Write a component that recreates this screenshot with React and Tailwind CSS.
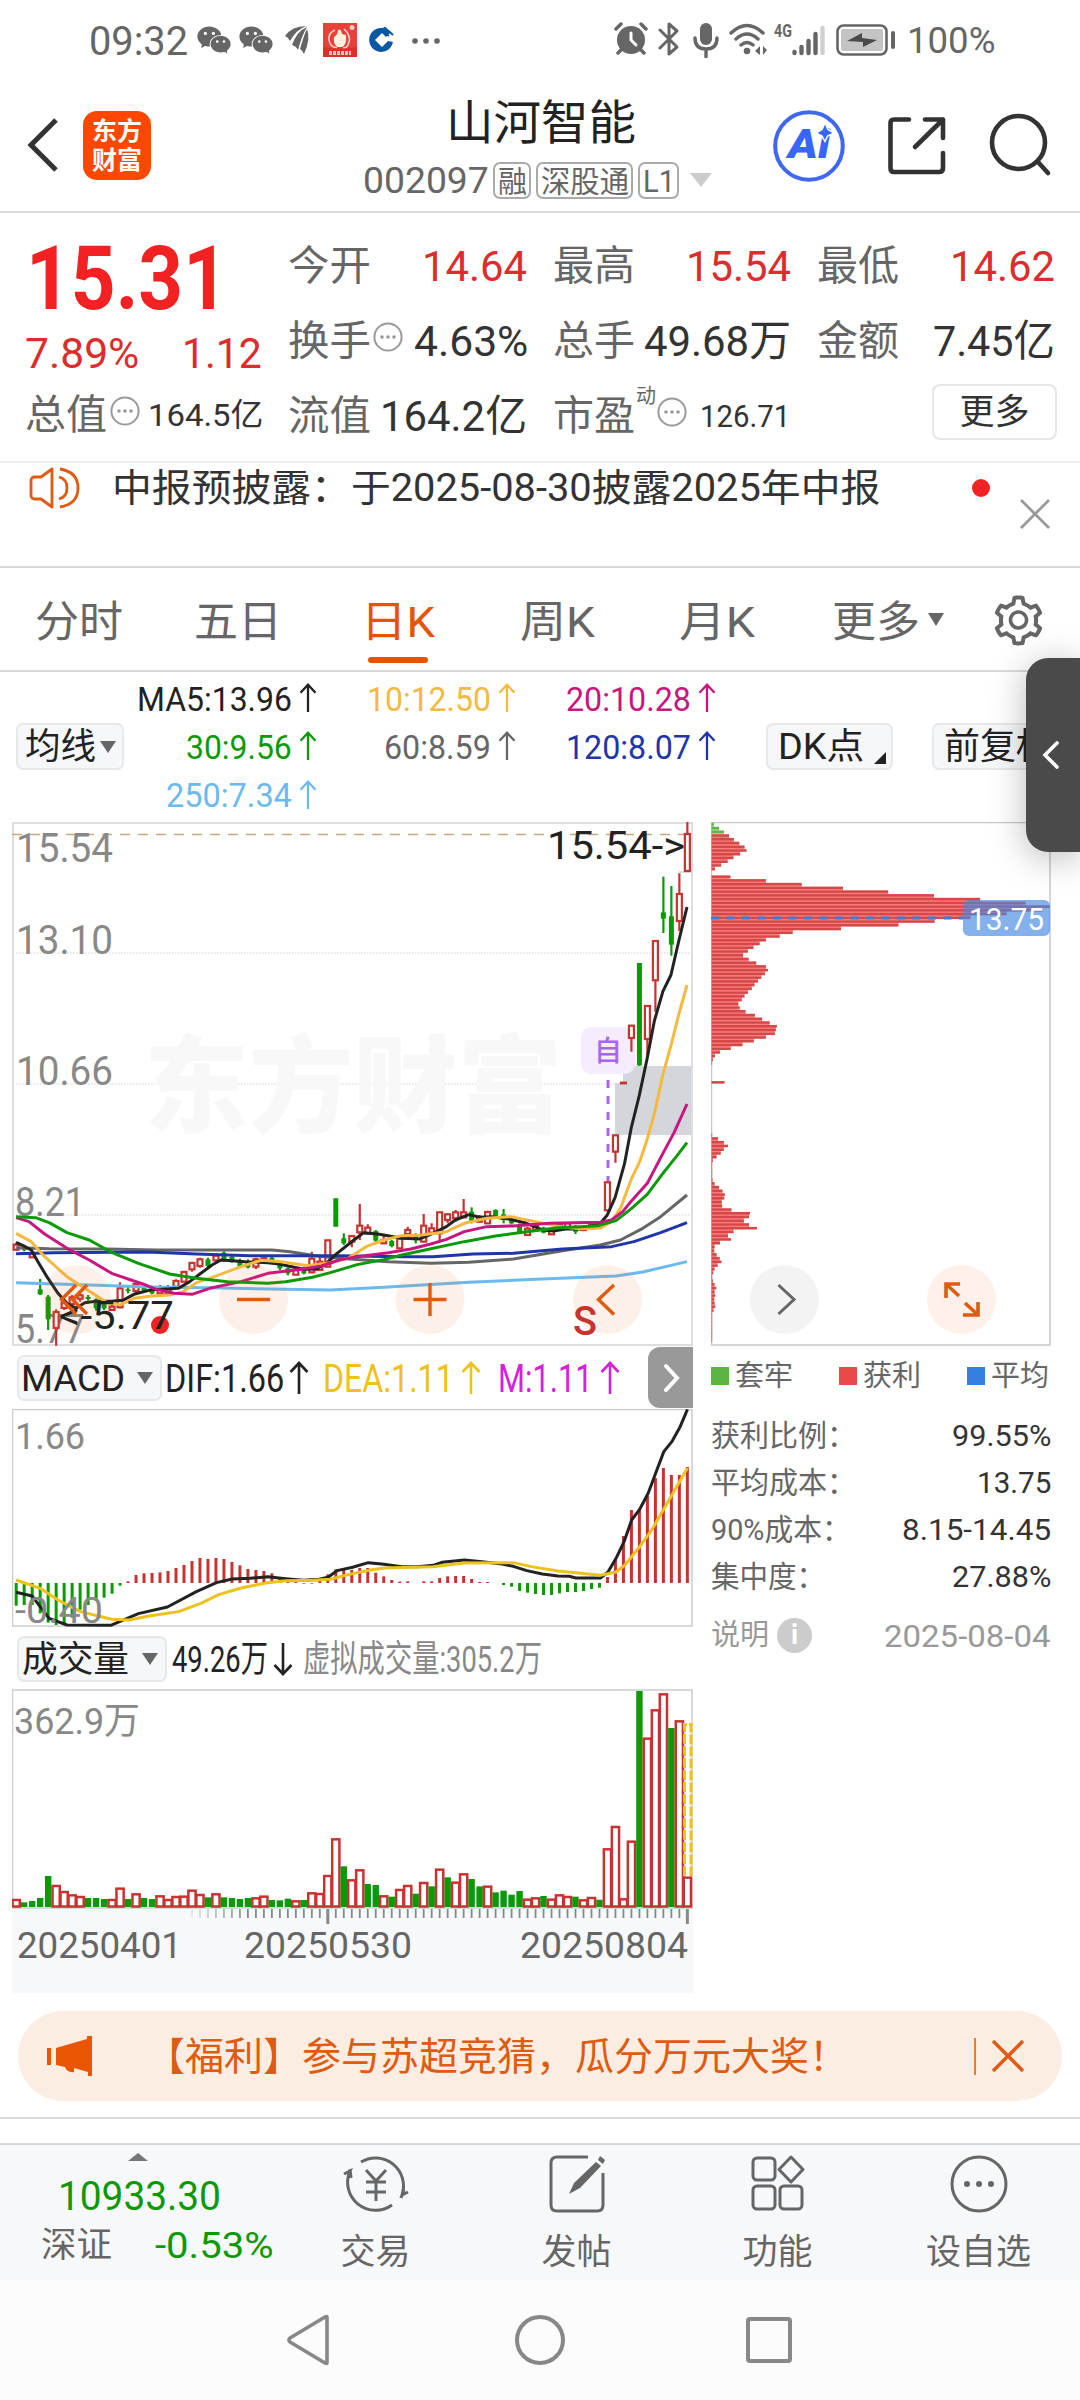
import { useLayoutEffect, useRef, useState } from "react";
import { AiOutlineSetting, AiFillWechat } from "react-icons/ai";

const RED = "#c8332f";
const GREEN = "#0b9a06";
const ORANGE = "#e05a10";

/* Single line of text, condensed or widened to fill the width of its box. */
function Fit({ className = "", children }) {
  const box = useRef(null);
  const inner = useRef(null);
  const [scale, setScale] = useState(1);
  useLayoutEffect(() => {
    const measure = () => {
      if (inner.current.offsetWidth) setScale(box.current.clientWidth / inner.current.offsetWidth);
    };
    measure();
    document.fonts?.ready.then(measure);
  }, []);
  return (
    <span ref={box} className={"block shrink-0 whitespace-nowrap " + className}>
      <span ref={inner} className="inline-block origin-left" style={{ transform: `translateY(1px) scaleX(${scale})` }}>
        {children}
      </span>
    </span>
  );
}

function Dots({ className = "" }) {
  return (
    <svg viewBox="0 0 30 30" className={"h-[30px] w-[30px] shrink-0 " + className}>
      <circle cx="15" cy="15" r="13.6" fill="none" stroke="#999" strokeWidth="2" />
      <circle cx="9" cy="15" r="1.8" fill="#999" />
      <circle cx="15" cy="15" r="1.8" fill="#999" />
      <circle cx="21" cy="15" r="1.8" fill="#999" />
    </svg>
  );
}

function Down({ className = "", color = "#666" }) {
  return (
    <svg viewBox="0 0 16 12" preserveAspectRatio="none" className={"h-[12px] w-[16px] shrink-0 " + className}>
      <path d="M0 0H16L8 12Z" fill={color} />
    </svg>
  );
}

function Arrow({ className = "", flip = false }) {
  return (
    <svg viewBox="0 0 20 34" className={"w-[20px] shrink-0 " + className}>
      <path
        d={flip ? "M10 1V33M1.5 23L10 32L18.5 23" : "M10 33V1M1.5 11L10 2L18.5 11"}
        fill="none"
        stroke="currentColor"
        strokeWidth="2.6"
      />
    </svg>
  );
}

function StatusBar() {
  return (
    <div className="flex h-[80px] items-center text-[#666]">
      <Fit className="ml-[89px] w-[99px] text-[41px] leading-[78px]">09:32</Fit>
      <AiFillWechat className="ml-[7px] h-[38px] w-[38px]" />
      <AiFillWechat className="ml-[4px] h-[38px] w-[38px]" />
      <svg viewBox="0 0 26 30" className="ml-[10px] h-[30px] w-[26px]" fill="#666">
        <path d="M0 11Q7 1 21 1Q11 5 5 16Q3 12 0 11Z" />
        <path d="M7 20Q12 6 22 2Q17 10 13 25Q11 21 7 20Z" />
        <path d="M15 24Q19 10 22 4Q26 14 19 29Q18 26 15 24Z" />
      </svg>
      <svg viewBox="0 0 34 34" className="ml-[12px] h-[34px] w-[34px]">
        <rect width="34" height="34" fill="#e8413c" />
        <path d="M12 7Q5 10 6 17T14 25M21 6Q28 12 26 19T20 25" fill="none" stroke="#fbd9cf" strokeWidth="1.5" />
        <path d="M15 7Q18 5 19 11L23 12Q24 22 19 24H14Q10 21 11 14Q15 12 15 7Z" fill="#fdf0dc" />
        <circle cx="29" cy="4.500" r="2.500" fill="#f9c9bd" />
        <path d="M0 24Q17 27 34 24V34H0Z" fill="#dc2f2a" />
        <path d="M6 30H28" stroke="#f6c3b4" strokeWidth="4" strokeDasharray="3 1" />
      </svg>
      <svg viewBox="0 0 26 26" className="ml-[12px] h-[26px] w-[26px]">
        <path d="M19 3A12 12 0 1 0 24 15L19 14L13 20L6 13L13 6L17 10L22 5Z" fill="#0a57a4" />
        <path d="M15 0L24 8M11 2L20 9" stroke="#0a57a4" strokeWidth="2" />
        <path d="M13 8L18 13L13 18L8 13Z" fill="#fff" />
      </svg>
      <svg viewBox="0 0 28 6" className="ml-[17px] mt-[1px] h-[6px] w-[28px]" fill="#666">
        <circle cx="3" cy="3" r="2.800" />
        <circle cx="14" cy="3" r="2.800" />
        <circle cx="25" cy="3" r="2.800" />
      </svg>
      <svg viewBox="0 0 34 34" className="-mt-[2px] ml-[174px] h-[34px] w-[34px]">
        <circle cx="17" cy="18" r="14" fill="#666" />
        <path d="M2 7L7 2M32 7L27 2M7 28L4 31M27 28L30 31" stroke="#666" strokeWidth="3.500" strokeLinecap="round" />
        <path d="M17 11V18L22 23" fill="none" stroke="#fff" strokeWidth="3" strokeLinecap="round" />
      </svg>
      <svg viewBox="0 0 22 34" className="-mt-[2px] ml-[10px] h-[34px] w-[22px]">
        <path d="M2 8L19 25L11 32V2L19 9L2 26" fill="none" stroke="#666" strokeWidth="3" strokeLinejoin="round" strokeLinecap="round" />
      </svg>
      <svg viewBox="0 0 26 36" className="ml-[13px] h-[36px] w-[26px]">
        <rect x="7" y="1" width="12" height="22" rx="6" fill="#666" />
        <path d="M2 16Q2 27 13 27T24 16M13 27V35" fill="none" stroke="#666" strokeWidth="3.400" strokeLinecap="round" />
      </svg>
      <svg viewBox="0 0 38 34" className="-mt-[2px] ml-[10px] h-[34px] w-[38px]" fill="none" stroke="#666" strokeWidth="3.400" strokeLinecap="round">
        <path d="M2 11Q18 -4 34 11M7 17Q18 7 29 17M12 23Q18 18 24 23" />
        <circle cx="18" cy="29" r="1.600" fill="#666" />
        <path d="M31 24V33L26 29ZM34 24V33L38 28Z" fill="#666" strokeWidth="0" />
      </svg>
      <Fit className="-mt-[20px] ml-[7px] w-[18px] text-[19px] font-bold leading-[20px]">4G</Fit>
      <svg viewBox="0 0 33 31" className="h-[31px] w-[33px]" strokeWidth="4.400" strokeLinecap="round">
        <path d="M2.500 27V28M9.500 22V28M16.500 16V28M23.500 9V28" stroke="#666" />
        <path d="M30.500 3V28" stroke="#d0d0d0" />
      </svg>
      <svg viewBox="0 0 60 32" className="-mt-[1px] ml-[11px] h-[32px] w-[60px]">
        <rect x="1.500" y="1.500" width="49" height="29" rx="6" fill="none" stroke="#666" strokeWidth="2.600" />
        <rect x="5" y="5" width="42" height="22" rx="2" fill="#c4c4c4" />
        <path d="M11 17L26 9V14L41 16L27 23V18Z" fill="#4a4a4a" />
        <path d="M57 9V23" stroke="#666" strokeWidth="4" strokeLinecap="round" />
      </svg>
      <Fit className="ml-[11px] w-[88px] text-[37px] leading-[80px]">100%</Fit>
    </div>
  );
}

function Header() {
  return (
    <div className="flex h-[133px] border-b-2 border-[#dadada]">
      <svg viewBox="0 0 32 56" className="ml-[27px] mt-[37px] h-[56px] w-[32px]">
        <path d="M29 3L4 28L29 53" fill="none" stroke="#333" strokeWidth="5" />
      </svg>
      <div className="ml-[24px] mt-[31px] flex h-[69px] w-[68px] flex-col items-center justify-center rounded-[14px] bg-[#ff4700] text-[25px] font-bold leading-[29px] text-white">
        <span>东方</span>
        <span>财富</span>
      </div>
      <div className="ml-[211px] flex w-[354px] flex-col">
        <Fit className="ml-[84px] mt-[13px] w-[190px] text-[47px] leading-[58px] text-[#222]">山河智能</Fit>
        <div className="mt-[10px] flex h-[38px] items-center text-[30px] leading-[33px] text-[#666]">
          <Fit className="ml-[1px] w-[126px] text-[37px] leading-[38px]">002097</Fit>
          <span className="ml-[4px] flex h-[37px] w-[38px] justify-center rounded-[7px] border-2 border-[#aaa]">
            <Fit className="w-[29px]">融</Fit>
          </span>
          <span className="ml-[5px] flex h-[37px] w-[97px] justify-center rounded-[7px] border-2 border-[#aaa]">
            <Fit className="w-[88px]">深股通</Fit>
          </span>
          <span className="ml-[5px] flex h-[37px] w-[41px] justify-center rounded-[7px] border-2 border-[#aaa]">
            <Fit className="w-[32px] text-[32px]">L1</Fit>
          </span>
          <Down className="ml-[11px] h-[14px] w-[22px]" color="#ccc" />
        </div>
      </div>
      <svg viewBox="0 0 72 72" className="ml-[57px] mt-[30px] h-[72px] w-[72px] shrink-0">
        <circle cx="36" cy="36" r="33.800" fill="none" stroke="#3f68f0" strokeWidth="4" />
        <text x="15" y="48" textLength="42" lengthAdjust="spacingAndGlyphs" fontSize="40" fontWeight="900" fontStyle="italic" fill="#3665ff" className="font-[Roboto]">
          Ai
        </text>
        <path d="M52 13L55 19.500L61 23L54.500 26L52 31.500L49 26L43 23L49 19.500Z" fill="#3665ff" stroke="#fff" strokeWidth="1.500" />
      </svg>
      <svg viewBox="0 0 60 60" className="ml-[42px] mt-[36px] h-[60px] w-[60px] shrink-0" fill="none" stroke="#333" strokeWidth="4.600" strokeLinecap="round" strokeLinejoin="round">
        <path d="M22 3.500H7Q3.500 3.500 3.500 7V52Q3.500 56 7 56H52Q56 56 56 52V37" />
        <path d="M38 3.500H56V22M56 3.500L28 31" />
      </svg>
      <svg viewBox="0 0 64 64" className="ml-[42px] mt-[33px] h-[64px] w-[64px] shrink-0" fill="none" stroke="#333" strokeWidth="4.600" strokeLinecap="round">
        <circle cx="29.500" cy="29.500" r="26.500" />
        <path d="M49 49L59 60" />
      </svg>
    </div>
  );
}

function Quote() {
  return (
    <div className="flex h-[250px] border-b-2 border-[#efefef] pl-[25px] pt-[15px] text-[41px] text-[#666]">
      <div className="w-[237px]">
        <Fit className="ml-[1px] w-[202px] text-[89px] font-bold leading-[99px] text-[#f22222]">15.31</Fit>
        <div className="flex justify-between text-[43px] leading-[50px] text-[#dd2c2c]">
          <Fit className="w-[114px]">7.89%</Fit>
          <Fit className="w-[80px]">1.12</Fit>
        </div>
        <div className="flex items-center leading-[75px]">
          <Fit className="w-[82px]">总值</Fit>
          <Dots className="-mt-[8px] ml-[3px]" />
          <Fit className="ml-[8px] w-[115px] text-[32px] text-[#333]">164.5亿</Fit>
        </div>
      </div>
      <div className="ml-[26px] w-[239px] leading-[75px]">
        <div className="flex justify-between">
          <Fit className="w-[83px]">今开</Fit>
          <Fit className="w-[105px] text-[43px] text-[#dd2c2c]">14.64</Fit>
        </div>
        <div className="flex items-center">
          <Fit className="w-[83px]">换手</Fit>
          <Dots className="-mt-[8px] ml-[2px]" />
          <Fit className="ml-[11px] w-[114px] text-[43px] text-[#333]">4.63%</Fit>
        </div>
        <div className="flex justify-between">
          <Fit className="w-[83px]">流值</Fit>
          <Fit className="w-[147px] text-[43px] text-[#333]">164.2亿</Fit>
        </div>
      </div>
      <div className="ml-[26px] w-[238px] leading-[75px]">
        <div className="flex justify-between">
          <Fit className="w-[82px]">最高</Fit>
          <Fit className="w-[105px] text-[43px] text-[#dd2c2c]">15.54</Fit>
        </div>
        <div className="flex justify-between">
          <Fit className="w-[82px]">总手</Fit>
          <Fit className="w-[147px] text-[43px] text-[#333]">49.68万</Fit>
        </div>
        <div className="flex items-center">
          <Fit className="w-[82px]">市盈</Fit>
          <span className="-mt-[40px] ml-[1px] text-[20px] leading-[24px]">动</span>
          <Dots className="-mt-[8px] ml-[1px]" />
          <Fit className="ml-[13px] w-[90px] text-[31px] text-[#333]">126.71</Fit>
        </div>
      </div>
      <div className="ml-[26px] w-[238px] leading-[75px]">
        <div className="flex justify-between">
          <Fit className="w-[82px]">最低</Fit>
          <Fit className="w-[105px] text-[43px] text-[#dd2c2c]">14.62</Fit>
        </div>
        <div className="flex justify-between">
          <Fit className="w-[82px]">金额</Fit>
          <Fit className="w-[122px] text-[43px] text-[#333]">7.45亿</Fit>
        </div>
        <div className="ml-[115px] mt-[6px] flex h-[56px] w-[125px] items-center justify-center rounded-[8px] border-2 border-[#e6e6e6] pt-[2px] text-[35px] leading-[50px] text-[#333]">
          更多
        </div>
      </div>
    </div>
  );
}

function Notice() {
  return (
    <div className="flex h-[105px] border-b-2 border-[#dadada]">
      <svg viewBox="0 0 52 44" className="ml-[29px] mt-[3px] h-[44px] w-[52px]" fill="none" stroke={ORANGE} strokeWidth="2.800" strokeLinejoin="round">
        <path d="M23 3L12 11H6Q2 11 2 15V29Q2 33 6 33H12L23 41Z" />
        <path d="M30 11Q38 13 38 22T30 33M31 3Q49 6 49 22T31 41" />
      </svg>
      <Fit className="ml-[31px] w-[768px] text-[38px] leading-[49px] text-[#333]">中报预披露：于2025-08-30披露2025年中报</Fit>
      <span className="ml-[92px] mt-[16px] h-[18px] w-[18px] rounded-full bg-[#f22222]" />
      <svg viewBox="0 0 30 30" className="ml-[30px] mt-[36px] h-[30px] w-[30px]">
        <path d="M1 1L29 29M29 1L1 29" stroke="#999" strokeWidth="2.800" />
      </svg>
    </div>
  );
}

function Tabs() {
  return (
    <div className="flex h-[104px] border-b-2 border-[#dadada] text-[43px] leading-[106px] text-[#666]">
      <Fit className="ml-[35px] w-[88px]">分时</Fit>
      <Fit className="ml-[71px] w-[88px]">五日</Fit>
      <div className="ml-[78px] h-[102px] w-[75px] text-[#e65400]">
        <Fit className="ml-[1px] h-[88px] w-[74px]">日K</Fit>
        <div className="ml-[8px] mt-[1px] h-[6px] w-[60px] rounded-full bg-[#e65400]" />
      </div>
      <Fit className="ml-[85px] w-[75px]">周K</Fit>
      <Fit className="ml-[84px] w-[76px]">月K</Fit>
      <Fit className="ml-[77px] w-[88px]">更多</Fit>
      <Down className="ml-[8px] mt-[45px] h-[13px] w-[15px]" />
      <AiOutlineSetting className="ml-[46px] mt-[24px] h-[57px] w-[57px] shrink-0" />
    </div>
  );
}

const averages = [
  ["MA5:13.96", "w-[155px]", "text-[#222]"],
  ["10:12.50", "w-[124px]", "text-[#f5b93f]"],
  ["20:10.28", "w-[125px]", "text-[#c8157f]"],
  ["30:9.56", "w-[106px]", "text-[#0b9a06]"],
  ["60:8.59", "w-[107px]", "text-[#666]"],
  ["120:8.07", "w-[125px]", "text-[#1f35a8]"],
  ["250:7.34", "w-[126px]", "text-[#6bbaee]"],
];

function AverageBar() {
  return (
    <div className="flex h-[150px] text-[36px] text-[#222]">
      <div className="ml-[16px] mt-[51px] flex h-[47px] w-[108px] shrink-0 items-center rounded-[7px] border-2 border-[#e6e8ea] bg-[#f6f7f9] pl-[7px] leading-[43px]">
        <Fit className="w-[71px]">均线</Fit>
        <Down className="ml-[4px] w-[15px]" />
      </div>
      <div className="mt-[2px] grid h-[145px] shrink-0 grid-cols-[194px_199px_200px] text-[34px] leading-[47px]">
        {averages.map(([text, width, color]) => (
          <div key={text} className={"flex items-center justify-end " + color}>
            <Fit className={width}>{text}</Fit>
            <Arrow className="ml-[6px] h-[30px]" />
          </div>
        ))}
      </div>
      <div className="ml-[49px] mt-[51px] flex h-[47px] w-[127px] shrink-0 items-center rounded-[7px] border-2 border-[#e6e8ea] bg-[#f6f7f9] pl-[10px] leading-[43px]">
        <Fit className="w-[86px]">DK点</Fit>
        <svg viewBox="0 0 12 12" className="ml-[10px] mt-[22px] h-[12px] w-[12px]">
          <path d="M12 0V12H0Z" fill="#222" />
        </svg>
      </div>
      <div className="ml-[39px] mt-[51px] flex h-[47px] w-[148px] shrink-0 items-center rounded-[7px] border-2 border-[#e6e8ea] bg-[#f6f7f9] pl-[10px] leading-[43px]">
        <Fit className="w-[108px]">前复权</Fit>
      </div>
    </div>
  );
}

/* Daily bars: [up, high, top, bottom, low], three units to a pixel, zero at y 1080. */
const candles = [
  [1, 488, 494, 509, 512], [0, 497, 502, 510, 514], [1, 515, 521, 532, 534], [0, 597, 628, 643, 645], [0, 645, 650, 718, 750],
  [1, 688, 696, 744, 797], [1, 655, 668, 684, 690], [1, 645, 652, 672, 680], [1, 640, 646, 656, 665], [0, 645, 651, 657, 662],
  [0, 655, 658, 685, 692], [0, 665, 672, 685, 690], [1, 675, 680, 690, 692], [1, 607, 625, 682, 685], [0, 620, 628, 633, 640],
  [1, 606, 612, 633, 640], [0, 618, 624, 632, 638], [0, 625, 630, 640, 643], [1, 615, 628, 640, 642], [1, 615, 625, 640, 645],
  [1, 598, 603, 620, 622], [1, 572, 576, 605, 607], [1, 545, 549, 568, 575], [1, 533, 538, 558, 563], [0, 533, 538, 558, 563],
  [1, 520, 527, 541, 545], [0, 514, 518, 540, 545], [0, 526, 530, 543, 548], [0, 536, 541, 560, 563], [0, 538, 545, 562, 565],
  [1, 533, 538, 560, 567], [1, 525, 535, 545, 550], [0, 527, 533, 545, 548], [0, 548, 551, 565, 570], [0, 562, 565, 580, 586],
  [1, 565, 570, 584, 586], [0, 560, 564, 580, 583], [1, 515, 536, 577, 580], [1, 530, 545, 570, 573], [1, 480, 481, 560, 562],
  [0, 355, 355, 440, 440], [0, 460, 475, 490, 495], [1, 465, 468, 485, 502], [1, 372, 437, 457, 480], [1, 433, 443, 460, 463],
  [0, 450, 453, 482, 487], [1, 465, 480, 490, 492], [0, 480, 483, 498, 502], [1, 470, 476, 505, 507], [1, 440, 450, 462, 475],
  [0, 460, 465, 480, 490], [1, 402, 437, 485, 487], [1, 430, 445, 458, 465], [1, 396, 397, 460, 482], [1, 400, 403, 420, 430],
  [1, 390, 397, 415, 425], [1, 357, 397, 412, 415], [0, 382, 395, 425, 430], [1, 405, 412, 425, 428], [1, 392, 396, 430, 432],
  [0, 388, 390, 410, 412], [0, 387, 403, 420, 430], [0, 412, 416, 430, 433], [0, 430, 435, 458, 462], [1, 440, 446, 465, 467],
  [1, 435, 438, 450, 453], [0, 440, 443, 458, 460], [1, 444, 447, 463, 465], [1, 430, 435, 447, 450], [1, 428, 430, 441, 444],
  [0, 435, 438, 455, 462], [1, 438, 441, 450, 454], [1, 430, 433, 445, 448], [0, 430, 433, 440, 443], [1, 305, 307, 391, 392],
  [1, 165, 166, 215, 248], [1, 7, 8, 10, 12], [1, -165, -163, -126, -85], [0, -351, -351, -44, -42], [1, -224, -222, -123, -75],
  [1, -419, -417, -299, -205], [0, -610, -503, -484, -441], [0, -582, -491, -406, -373], [1, -620, -558, -477, -447], [1, -774, -738, -627, -626],
];

const DAY = 7.99;
const dayX = (i) => 16.2 + DAY * i;

const averageLines = [
  ["#6bbaee", "36,608 200,615 340,621 500,624 640,628 740,630 860,622 1050,607 1200,598 1380,588 1440,576 1539,545"],
  ["#666666", "36,503 110,506 240,507 350,510 610,510 650,515 710,528 760,535 870,545 965,550 1050,547 1150,537 1200,526 1260,512 1345,495 1390,480 1440,445 1480,410 1539,345"],
  ["#1f35a8", "36,521 120,518 330,516 440,522 560,527 760,527 900,530 970,530 1060,522 1150,520 1260,507 1370,500 1420,485 1480,458 1539,428"],
  ["#222222", "36,487 52,497 70,510 85,545 105,590 130,640 150,670 170,685 190,668 215,664 250,664 275,661 300,643 340,629 375,627 400,625 425,605 450,580 475,555 495,540 550,545 600,548 625,552 680,568 710,567 735,545 755,520 790,483 815,458 850,463 900,475 940,477 965,463 1000,440 1020,420 1050,404 1075,412 1100,410 1140,417 1180,430 1215,450 1240,453 1270,446 1300,447 1345,430 1360,406 1378,352 1399,251 1414,144 1432,47 1449,-60 1466,-178 1485,-266 1503,-315 1520,-414 1539,-519"],
  ["#f5b93f", "36,460 70,485 100,530 150,590 190,625 240,668 270,674 300,655 340,648 380,645 410,635 440,608 480,590 540,560 585,541 630,545 690,557 740,548 780,535 820,500 860,480 900,467 940,466 1000,455 1040,430 1090,415 1145,410 1215,430 1260,441 1300,446 1345,444 1370,425 1390,385 1415,295 1433,245 1449,181 1466,101 1485,-17 1503,-103 1520,-194 1539,-285"],
  ["#c8157f", "36,413 65,425 100,462 150,505 200,540 250,580 320,612 350,628 390,640 430,643 470,625 540,605 600,580 680,567 720,558 760,540 800,530 870,518 920,507 965,492 1000,478 1040,455 1090,440 1150,438 1230,430 1345,427 1370,420 1395,395 1415,362 1450,310 1485,220 1510,158 1539,72"],
  ["#0b9a06", "36,410 80,413 110,428 150,458 200,480 250,517 310,550 380,582 440,595 510,605 600,610 640,605 700,592 740,578 800,554 860,539 900,525 960,508 1040,485 1110,468 1180,455 1250,443 1300,440 1340,437 1380,422 1415,385 1450,343 1485,280 1515,230 1539,188"],
];

function Label({ x, y, w, size = 39, fill = "#888", weight = 400, children }) {
  return (
    <text x={x} y={y} textLength={w} lengthAdjust="spacingAndGlyphs" fontSize={size} fontWeight={weight} fill={fill}>
      {children}
    </text>
  );
}

function PriceChart() {
  return (
    <svg viewBox="12 822 681 524" className="block h-[524px] w-[681px]">
      <rect x="13" y="823" width="679" height="522" fill="#fff" stroke="#dedede" strokeWidth="2" />
      <g stroke="#e2e2e2" strokeWidth="1.500" strokeDasharray="1.500 1.500">
        <path d="M13 953H691M13 1084H691M13 1215H691" />
      </g>
      <text x="144" y="1124" textLength="418" lengthAdjust="spacingAndGlyphs" fontSize="106" fontWeight="900" fill="#f8f8f8">
        东方财富
      </text>
      <path d="M623 1066H691V1135H615V1083H623Z" fill="#d3d6db" />
      <path d="M679 872H691" stroke="#d3d6db" strokeWidth="1.500" />
      <path d="M12 834.500H691" stroke="#c9a978" strokeWidth="1.500" strokeDasharray="10 8" />
      <rect x="581" y="1027" width="54" height="47" rx="10" fill="#f5ecff" />
      <text x="608" y="1061" textAnchor="middle" fontSize="28" fontWeight="500" fill="#a866ee">自</text>
      <path d="M608 1080V1182" stroke="#a866ee" strokeWidth="3" strokeDasharray="8 8" />
      <Label x="16" y="861.500" w="97" size={40}>15.54</Label>
      <Label x="16" y="954" w="97" size={40}>13.10</Label>
      <Label x="16" y="1085" w="97" size={40}>10.66</Label>
      <Label x="15" y="1216" w="70" size={40}>8.21</Label>
      <Label x="15" y="1343" w="70" size={40}>5.77</Label>
      {candles.map(([up, high, top, bottom, low], i) => {
        const x = dayX(i);
        const y = (v) => 1080 + v / 3;
        return up ? (
          <g key={i} stroke={RED}>
            <path d={`M${x} ${y(high)}V${y(top)}M${x} ${y(bottom)}V${y(low)}`} strokeWidth="2.200" />
            <rect x={x - 2.5} y={y(top)} width="5" height={y(bottom) - y(top)} fill="#fff" strokeWidth="2.200" />
          </g>
        ) : (
          <g key={i} fill={GREEN}>
            <rect x={x - 1.1} y={y(high)} width="2.200" height={y(low) - y(high)} />
            <rect x={x - 2.5} y={y(top)} width="5" height={y(bottom) - y(top)} />
          </g>
        );
      })}
      <g transform="translate(0 1080) scale(0.4464 0.3333)" fill="none" strokeWidth="3" strokeLinejoin="round">
        {averageLines.map(([color, points]) => (
          <polyline key={color} points={points} stroke={color} vectorEffect="non-scaling-stroke" />
        ))}
      </g>
      <Label x="547" y="859" w="138" size={39} fill="#222">{"15.54->"}</Label>
      <g fill="#ee6a20" fillOpacity="0.1">
        <circle cx="77" cy="1299.500" r="34.500" />
        <circle cx="253.500" cy="1299.500" r="34.500" />
        <circle cx="430" cy="1299.500" r="34.500" />
        <circle cx="607.500" cy="1299.500" r="34.500" />
      </g>
      <circle cx="160" cy="1325" r="9" fill="#ee2222" />
      <Label x="59" y="1329" w="115" size={39} fill="#222">{"<-5.77"}</Label>
      <g fill="none" stroke={ORANGE} strokeWidth="3.400">
        <path d="M76 1285L61.500 1299.500L76 1314M87 1285L72.500 1299.500L87 1314" />
        <path d="M237 1299.500H270M413.500 1299.500H446.500M430 1283V1316M614 1285L598.500 1299.500L614 1314.500" />
      </g>
      <Label x="573" y="1335" w="24" size={41} weight={500} fill={RED}>S</Label>
    </svg>
  );
}

const macd = [
  797, 795, 795, 820, 848, 855, 853, 833, 809, 795, 783, 773, 761, 737, 724, 705, 700, 699, 697, 693, 684, 675, 663, 654, 657, 654, 657,
  666, 676, 687, 690, 693, 700, 713, 721, 726, 731, 731, 720, 703, 688, 690, 690, 684, 684, 698, 709, 720, 725, 724, 729, 724, 724, 714,
  709, 708, 708, 717, 726, 726, 729, 735, 740, 753, 758, 762, 765, 765, 760, 756, 756, 753, 747, 743, 711, 657, 588, 510, 506, 468, 414,
  384, 405, 405, 381,
];

function MacdChart() {
  return (
    <svg viewBox="12 1409 681 218" className="block h-[218px] w-[681px]">
      <rect x="12.500" y="1409.500" width="679.500" height="216.500" fill="#fff" stroke="#ccc" strokeWidth="1.500" />
      {macd.map((v, i) => (
        <path key={i} d={`M${dayX(i)} 1583V${1340 + v / 3}`} stroke={v < 729 ? RED : GREEN} strokeWidth="3" />
      ))}
      <g transform="translate(0 1340) scale(0.4464 0.3333)" fill="none" strokeWidth="3" strokeLinejoin="round">
        <polyline
          vectorEffect="non-scaling-stroke"
          stroke="#222"
          points="36,757 72,768 90,800 110,835 150,855 248,856 310,821 375,801 440,755 485,728 520,717 560,715 600,710 640,716 680,721 715,718 735,712 755,692 790,682 825,668 860,673 900,680 935,680 970,676 990,667 1040,660 1080,665 1120,671 1150,679 1180,692 1215,702 1250,708 1275,709 1290,714 1345,714 1362,696 1380,655 1398,605 1415,540 1433,508 1452,460 1470,395 1487,335 1505,305 1523,262 1540,208"
        />
        <polyline
          vectorEffect="non-scaling-stroke"
          stroke="#eec21c"
          points="36,720 90,745 130,780 180,815 250,838 290,840 330,829 400,815 450,790 490,764 540,744 600,728 640,722 700,721 740,718 780,704 830,690 860,684 970,680 1040,669 1150,668 1190,680 1250,693 1300,700 1345,706 1380,696 1400,675 1433,620 1460,570 1490,500 1540,384"
        />
      </g>
      <Label x="15" y="1449" w="70" size={37}>1.66</Label>
      <Label x="15" y="1623" w="88" size={37}>-0.40</Label>
    </svg>
  );
}

/* Volume bars: distance of the bar's top, then its direction. */
const volumes =
  "657r 667g 663g 654g 588g 615r 633r 643r 648r 654g 654g 657g 657r 623r 657g 640r 654g 657g 646r 657r 648r 647r 629r 642r 652g 640r 652g 654g 657g 654g 652r 647r 660g 661g 656g 661r 660g 637r 639r 585r 475r 559g 598r 568r 612g 615g 646r 650g 627r 615r 641g 606r 619g 566r 592g 605r 580r 597g 619g 617r 637g 632g 644g 633g 656r 652r 648g 656r 643r 648r 650g 658r 651r 659g 505r 438r 655r 482r 33g 173r 88r 40r 144g 121r 590r"
    .split(" ")
    .map((s) => [1680 + parseInt(s, 10) / 3, s.endsWith("r")]);

function VolumeChart() {
  return (
    <svg viewBox="12 1689 681 304" className="block h-[304px] w-[681px]">
      <rect x="12" y="1908" width="681" height="85" fill="#f7f8fa" />
      <rect x="12.500" y="1690" width="679.500" height="218" fill="#fff" stroke="#ccc" strokeWidth="1.500" />
      {volumes.map(([top, up], i) =>
        up ? (
          <rect key={i} x={dayX(i) - 3.6} y={top + 1} width="7.200" height={1905.5 - top} fill="#fff" stroke={RED} strokeWidth="2.500" />
        ) : (
          <rect key={i} x={dayX(i) - 3.2} y={top} width="6.400" height={1907 - top} fill={GREEN} />
        )
      )}
      <path d="M684.500 1876V1724.500H691V1876" fill="none" stroke="#eec21c" strokeWidth="3" strokeDasharray="10 2" />
      <path d="M682.600 1730V1872" stroke={RED} strokeWidth="1.500" strokeDasharray="2 10" />
      {Array.from({ length: 63 }, (_, k) => k + 22).map((i) => {
        const major = i === 39 || i === 84;
        return (
          <path
            key={i}
            d={`M${dayX(i)} 1909V${major ? 1924 : 1918}`}
            stroke="#888"
            strokeWidth={major ? 3 : 1.8}
            opacity={Math.min(1, 0.15 + (i - 22) * 0.12)}
          />
        );
      })}
      <Label x="14" y="1734" w="126" size={37}>362.9万</Label>
      <Label x="17" y="1958" w="165" size={37} fill="#666">20250401</Label>
      <Label x="244" y="1958" w="168" size={37} fill="#666">20250530</Label>
      <Label x="520" y="1958" w="168" size={37} fill="#666">20250804</Label>
    </svg>
  );
}

const chips = [
  505, 520, 534, 549, 563, 579, 594, 600, 581, 562, 545, 526, 508, 498, 553, 656, 760, 880, 1011, 1144, 1278, 1410, 1480, 1460, 1355, 1250,
  1146, 1041, 874, 734, 696, 656, 638, 620, 604, 590, 606, 628, 656, 662, 653, 643, 633, 623, 615, 604, 594, 586, 576, 580, 597, 624, 645,
  667, 688, 685, 682, 656, 621, 588, 554, 523, 508, 502, 500, 498, 498, 498, 498, 536, 498, 498, 498, 498, 498, 498, 498, 498, 498, 498,
  498, 498, 498, 500, 517, 534, 546, 534, 525, 513, 502, 500, 500, 500, 500, 501, 507, 520, 530, 537, 535, 528, 529, 556, 610, 607, 592,
  607, 630, 562, 546, 555, 523, 507, 506, 513, 522, 527, 516, 507, 503, 500, 502, 507, 512, 507, 509, 506, 507, 509, 504, 500, 500, 500,
  500, 500, 500, 500, 500,
].map((v) => (v - 498) / 2.904);

function ChipChart() {
  return (
    <svg viewBox="711 822 340 524" className="block h-[524px] w-[340px]">
      <rect x="711.500" y="822.500" width="338.500" height="522.500" fill="#fff" stroke="#c8c8c8" strokeWidth="1.500" />
      {chips.map((w, k) => {
        const y = 823 + k * 3.74;
        const next = Math.min(w, chips[k + 1] ?? 0);
        const trapped = k < 3;
        return (
          <g key={k}>
            <rect x="711.500" y={y + 2} width={next} height="2" fill={trapped ? "#a5dd93" : "#ff8080"} />
            <rect x="711.500" y={y} width={w} height="2.600" fill={trapped ? "#5fb548" : "#d64848"} />
          </g>
        );
      })}
      <path d="M711 918H963" stroke="#3a7fe0" strokeWidth="3" strokeDasharray="8 7.500" />
      <rect x="963" y="900" width="87" height="36" rx="6" fill="#4488e2" fillOpacity="0.66" />
      <Label x="969" y="930" w="75" size={32} fill="#fff">13.75</Label>
      <circle cx="784.500" cy="1299.500" r="34.500" fill="#f3f3f3" />
      <path d="M778.500 1285L794 1299.500L778.500 1314" fill="none" stroke="#666" strokeWidth="3" />
      <circle cx="961.500" cy="1299.500" r="34.500" fill="#fff1ea" />
      <path d="M946 1298V1284H960M946 1284L959 1296M978 1302V1315H963M977 1314L965 1303" fill="none" stroke={ORANGE} strokeWidth="3.600" />
    </svg>
  );
}

const costRows = [
  ["获利比例：", "w-[145px]", "99.55%", "w-[99px]"],
  ["平均成本：", "w-[145px]", "13.75", "w-[74px]"],
  ["90%成本：", "w-[140px]", "8.15-14.45", "w-[149px]"],
  ["集中度：", "w-[114px]", "27.88%", "w-[99px]"],
];

function Charts() {
  return (
    <div className="flex h-[1171px] pl-[12px]">
      <div className="w-[681px]">
        <PriceChart />
        <div className="flex h-[63px] items-center pl-[5px] text-[39px] leading-[62px]">
          <div className="flex h-[46px] w-[145px] shrink-0 items-center rounded-[7px] border-2 border-[#e6e8ea] bg-[#f6f7f9] pl-[2px] leading-[42px] text-[#222]">
            <Fit className="w-[104px] text-[37px]">MACD</Fit>
            <Down className="ml-[12px]" />
          </div>
          <Fit className="ml-[3px] w-[119px] text-[#222]">DIF:1.66</Fit>
          <Arrow className="ml-[5px] h-[34px] text-[#222]" />
          <Fit className="ml-[14px] w-[131px] text-[#eec21c]">DEA:1.11</Fit>
          <Arrow className="ml-[7px] h-[34px] text-[#eec21c]" />
          <Fit className="ml-[17px] w-[95px] text-[#d422dc]">M:1.11</Fit>
          <Arrow className="ml-[7px] h-[34px] text-[#d422dc]" />
          <div className="ml-auto flex h-[61px] w-[45px] items-center justify-center rounded-l-[12px] bg-[#999]">
            <svg viewBox="0 0 18 30" className="ml-[2px] h-[30px] w-[18px]">
              <path d="M3 3L14 15L3 27" fill="none" stroke="#fff" strokeWidth="4" strokeLinecap="round" />
            </svg>
          </div>
        </div>
        <MacdChart />
        <div className="flex h-[62px] items-center pl-[5px] pt-[2px] text-[37px] leading-[60px]">
          <div className="flex h-[46px] w-[150px] shrink-0 items-center rounded-[7px] border-2 border-[#e6e8ea] bg-[#f6f7f9] pl-[3px] leading-[42px] text-[#222]">
            <Fit className="w-[107px] text-[36px]">成交量</Fit>
            <Down className="ml-[13px]" />
          </div>
          <Fit className="ml-[5px] w-[96px] text-[#222]">49.26万</Fit>
          <Arrow flip className="ml-[5px] h-[34px] text-[#222]" />
          <Fit className="ml-[10px] w-[239px] text-[#888]">虚拟成交量:305.2万</Fit>
        </div>
        <VolumeChart />
      </div>
      <div className="ml-[18px] w-[340px]">
        <ChipChart />
        <div className="flex h-[58px] items-center justify-between pr-[2px] pt-[2px] text-[29px] leading-[56px] text-[#666]">
          <span className="flex items-center gap-[6px]"><i className="h-[18px] w-[18px] bg-[#5bb545]" />套牢</span>
          <span className="flex items-center gap-[6px]"><i className="h-[18px] w-[18px] bg-[#e84848]" />获利</span>
          <span className="flex items-center gap-[6px]"><i className="h-[18px] w-[18px] bg-[#3480e0]" />平均</span>
        </div>
        <div className="pt-[7px] text-[30px] leading-[47px] text-[#666]">
          {costRows.map(([label, labelWidth, value, valueWidth]) => (
            <div key={label} className="flex justify-between">
              <Fit className={labelWidth}>{label}</Fit>
              <Fit className={"text-[#333] " + valueWidth}>{value}</Fit>
            </div>
          ))}
        </div>
        <div className="flex items-center pt-[13px] text-[29px] leading-[47px] text-[#999]">
          说明
          <span className="ml-[8px] flex h-[35px] w-[35px] items-center justify-center rounded-full bg-[#ccc] text-[27px] font-bold leading-[35px] text-white">i</span>
          <Fit className="ml-auto w-[167px] text-[31px]">2025-08-04</Fit>
        </div>
      </div>
    </div>
  );
}

function Banner() {
  return (
    <div className="h-[126px] border-b-2 border-[#dadada] px-[18px] pt-[18px]">
      <div className="flex h-[90px] items-center rounded-full bg-[#fcede3] pl-[29px] text-[#e05a10]">
        <svg viewBox="0 0 46 40" className="h-[40px] w-[46px]" fill="#ea5504">
          <path d="M0 12H4V29H0ZM9 12L40 3V0H45V40H41V36L27 32V36Q20 37 18 31L9 29Z" />
        </svg>
        <Fit className="ml-[53px] w-[702px] text-[39px] leading-[90px]">【福利】参与苏超竞猜，瓜分万元大奖！</Fit>
        <span className="ml-[126px] h-[37px] w-[2px] bg-[#e0803f]" />
        <svg viewBox="0 0 34 34" className="ml-[15px] h-[34px] w-[34px]">
          <path d="M2 2L32 32M32 2L2 32" stroke="#e05a10" strokeWidth="3.400" />
        </svg>
      </div>
    </div>
  );
}

function BottomItem({ label, children }) {
  return (
    <div className="flex w-[201px] flex-col items-center">
      <svg viewBox="0 0 68 60" className="mt-[8px] h-[60px] w-[68px]" fill="none" stroke="#666" strokeWidth="3">
        {children}
      </svg>
      <span className="mt-[14px] text-[35px] leading-[52px]">{label}</span>
    </div>
  );
}

function BottomBar() {
  return (
    <div className="mt-[24px] flex h-[137px] border-t-2 border-[#d8d8d8] bg-[#f7f8fa] text-[#666]">
      <div className="w-[275px] pl-[41px]">
        <svg viewBox="0 0 20 8" className="ml-[87px] mt-[8px] h-[8px] w-[20px]">
          <path d="M10 0L20 8H0Z" fill="#777" />
        </svg>
        <Fit className="ml-[17px] mt-[11px] w-[163px] text-[40px] leading-[48px] text-[#0b9a06]">10933.30</Fit>
        <div className="flex text-[37px] leading-[50px]">
          <Fit className="w-[71px] text-[35px]">深证</Fit>
          <Fit className="ml-[43px] w-[118px] text-[#0b9a06]">-0.53%</Fit>
        </div>
      </div>
      <BottomItem label="交易">
        <path d="M19 9A28 28 0 0 1 60 42L66 39M62 36L59 45M50 52A28 28 0 0 1 8 18L2 21M8 16L9 25" />
        <path d="M24 17L34 28L44 17M34 28V48M24 29H44M24 39H44" />
      </BottomItem>
      <BottomItem label="发帖">
        <path d="M45 4H14Q8 4 8 10V52Q8 58 14 58H54Q60 58 60 52V20" />
        <path d="M57 3L62 7L60 11L55 7ZM53 9L58 13L37 35L26 41L31 30Z" fill="#666" stroke="none" />
      </BottomItem>
      <BottomItem label="功能">
        <rect x="9" y="5" width="22" height="22" rx="4" />
        <rect x="9" y="33" width="22" height="23" rx="4" />
        <rect x="36" y="33" width="22" height="23" rx="4" />
        <path d="M47 4L59 16.500L47 29L35 16.500Z" strokeLinejoin="round" />
      </BottomItem>
      <BottomItem label="设自选">
        <circle cx="34" cy="31" r="27" />
        <g fill="#666" stroke="none">
          <circle cx="22" cy="31" r="3" />
          <circle cx="34" cy="31" r="3" />
          <circle cx="46" cy="31" r="3" />
        </g>
      </BottomItem>
    </div>
  );
}

function SystemNav() {
  return (
    <div className="flex h-[120px] items-center bg-[#fcfcfc]">
      <svg viewBox="0 0 46 54" className="ml-[285px] h-[54px] w-[46px]">
        <path d="M42 4V50Q42 51 40 50L5 29Q3 27 5 25L40 4Q42 3 42 4Z" fill="none" stroke="#888" strokeWidth="3.600" strokeLinejoin="round" />
      </svg>
      <span className="ml-[184px] h-[50px] w-[50px] rounded-full border-4 border-[#888]" />
      <span className="ml-[181px] h-[46px] w-[46px] rounded-[4px] border-4 border-[#888]" />
    </div>
  );
}

export default function App() {
  return (
    <div className="relative flex h-[2400px] w-[1080px] flex-col overflow-hidden bg-white font-[Roboto,'Noto_Sans_CJK_SC',sans-serif]">
      <StatusBar />
      <Header />
      <Quote />
      <Notice />
      <Tabs />
      <AverageBar />
      <Charts />
      <Banner />
      <BottomBar />
      <SystemNav />
      <div className="absolute right-0 top-[658px] flex h-[194px] w-[54px] items-center rounded-l-[22px] bg-[#4a4a4a] pl-[15px] shadow-[0_6px_36px_rgba(0,0,0,0.28)]">
        <svg viewBox="0 0 20 30" className="h-[30px] w-[20px]">
          <path d="M16 3L4 15L16 27" fill="none" stroke="#fff" strokeWidth="3.600" strokeLinecap="round" />
        </svg>
      </div>
    </div>
  );
}
